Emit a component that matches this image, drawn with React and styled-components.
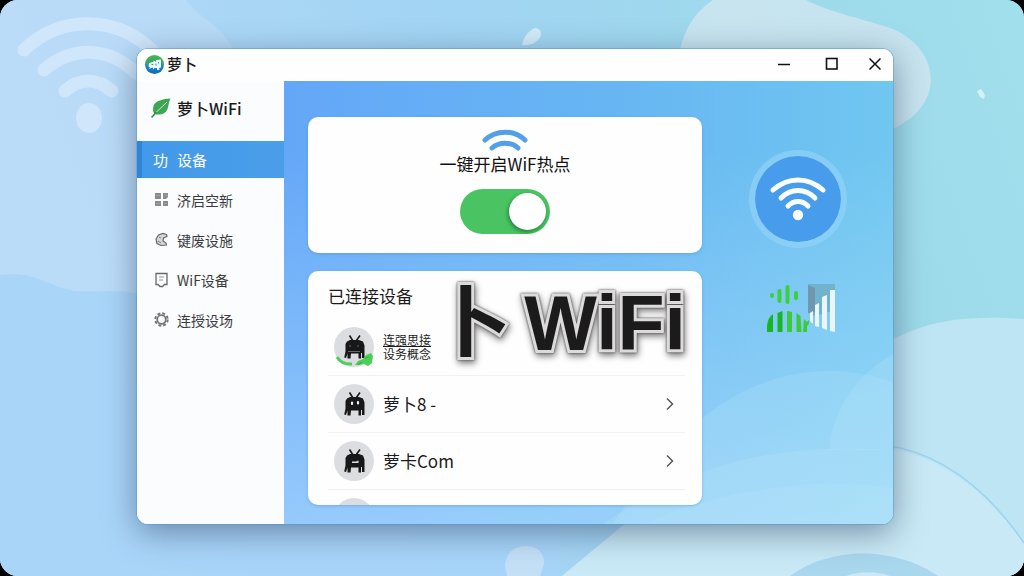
import styled, { createGlobalStyle } from 'styled-components';

const GlobalStyle = createGlobalStyle`
    *,
    *::before {
        box-sizing: border-box;
    }

    body {
        margin: 0;
        background: #000;
        color: #1b1b1d;
        font-family: 'Noto Sans CJK SC', 'Noto Sans', sans-serif;
    }

    button,
    input {
        margin: 0;
        font: inherit;
        color: inherit;
    }
`;

const Desktop = styled.div`
    position: relative;
    display: flex;
    height: 100vh;
    padding: 49px 131px 52px 137px;
    border-radius: 18px;
    overflow: hidden;
    background: #add6f7;
`;

const Wallpaper = styled.svg`
    position: absolute;
    inset: 0;
    width: 100%;
    height: 100%;
`;

const Window = styled.div`
    position: relative;
    flex: 1;
    min-width: 0;
    display: flex;
    flex-direction: column;
    border-radius: 11px;
    overflow: hidden;
    background: #fff;
`;

const WindowFrame = styled.div`
    position: relative;
    flex: 1;
    min-width: 0;
    display: flex;
    border-radius: 11px;
    box-shadow: 0 0 0 1px rgba(75, 155, 215, 0.5),
        0 8px 32px rgba(60, 80, 110, 0.6);
`;

const TitleBar = styled.header`
    display: flex;
    align-items: center;
    gap: 3px;
    height: 32px;
    padding: 0 0 2px 8px;
    background: #fefefe;
`;

const AppName = styled.span`
    flex: 1;
    font-size: 15px;
    line-height: 24px;
    font-weight: 500;
`;

const WindowButton = styled.button`
    display: grid;
    place-items: center;
    width: 45px;
    height: 30px;
    padding: 0;
    border: 0;
    background: none;

    &:last-child {
        width: 36px;
    }
`;

const Body = styled.div`
    flex: 1;
    min-height: 0;
    display: flex;
`;

const Sidebar = styled.aside`
    flex: 0 0 147px;
    background: #fafcfd;
`;

const Brand = styled.div`
    display: flex;
    align-items: center;
    gap: 6px;
    height: 60px;
    padding: 0 0 6px 14px;
    font-size: 16px;
    line-height: 24px;
    font-weight: 500;
`;

const Nav = styled.nav`
    display: flex;
    flex-direction: column;
    gap: 3px;
`;

const NavLink = styled.a`
    display: flex;
    align-items: center;
    gap: 7px;
    height: 37px;
    padding-left: 16px;
    font-size: ${(p) => (p.$active ? 15 : 14)}px;
    line-height: 20px;
    text-decoration: none;
    color: ${(p) => (p.$active ? '#fff' : '#3b3b3e')};
    background: ${(p) =>
        p.$active
            ? 'linear-gradient(90deg, #2f86d8 5px, #4399ea 5px, #4a9ee9)'
            : 'none'};
`;

const NavIcon = styled.span`
    display: flex;
    align-items: center;
    width: 17px;
`;

const Main = styled.main`
    position: relative;
    flex: 1;
    min-width: 0;
    display: flex;
    padding-left: 24px;
    background: linear-gradient(
            180deg,
            rgba(190, 230, 255, 0) 15%,
            rgba(190, 230, 255, 0.55)
        ),
        linear-gradient(90deg, #64a7f8, #67b6f3 55%, #70c7f0);
`;

const Waves = styled.svg`
    position: absolute;
    right: 0;
    bottom: 0;
    width: 310px;
    height: 190px;
`;

const Content = styled.div`
    position: relative;
    flex: 1;
    min-width: 0;
    display: flex;
    flex-direction: column;
    gap: 18px;
    padding: 36px 0 19px;
`;

const Card = styled.section`
    position: relative;
    border-radius: 10px;
    background: #fefefe;
    box-shadow: 0 1px 3px rgba(50, 120, 200, 0.35);
`;

const HotspotCard = styled(Card)`
    display: flex;
    flex-direction: column;
    align-items: center;
    flex-shrink: 0;
    padding: 12px 0 19px;
`;

const HotspotLabel = styled.label`
    font-size: 17px;
    line-height: 24px;
    margin: 1px 0 13px;
    color: #111;
`;

const Switch = styled.input`
    appearance: none;
    width: 90px;
    height: 45px;
    padding: 4px;
    border-radius: 23px;
    background: #4ac463;
    cursor: pointer;

    &::before {
        content: '';
        display: block;
        width: 37px;
        height: 37px;
        border-radius: 50%;
        background: #fff;
        box-shadow: -1px 2px 4px rgba(0, 70, 20, 0.55);
    }

    &:checked::before {
        margin-left: auto;
    }

    &:not(:checked) {
        background: #c5cbd0;
    }
`;

const DevicesCard = styled(Card)`
    flex: 1;
    min-height: 0;
    overflow: hidden;
    padding: 13px 17px 0 20px;
`;

const DevicesTitle = styled.h2`
    margin: 0 0 11px;
    font-size: 17px;
    line-height: 24px;
    font-weight: 400;
`;

const DeviceList = styled.ul`
    margin: 0;
    padding: 0;
    list-style: none;
`;

const Device = styled.li`
    display: flex;
    align-items: center;
    gap: 9px;
    height: 57px;
    padding: 0 10px 0 6px;
    border-bottom: 1px solid #f1f1f1;
`;

const Avatar = styled.svg`
    flex: none;
    width: 40px;
    height: 40px;
    overflow: visible;
`;

const DeviceName = styled.span`
    flex: 1;
    font-size: 17px;
    line-height: 24px;
`;

const DeviceNote = styled.span`
    font-size: 12px;
    line-height: 14px;

    u {
        text-underline-offset: 1px;
    }
`;

const OpenButton = styled.button`
    display: flex;
    padding: 0;
    border: 0;
    background: none;
    color: #55585c;
`;

const Lettering = styled.div`
    position: absolute;
    top: 182px;
    right: 16px;
    display: flex;
    align-items: baseline;
    gap: 13px;
    font-family: 'Liberation Sans', 'Noto Sans CJK SC', sans-serif;
    font-size: 77px;
    line-height: 120px;
    font-weight: 700;
    pointer-events: none;
    color: #1c1b1c;
    -webkit-text-stroke: 6px #dcdada;
    paint-order: stroke fill;
    stroke-linejoin: round;
    filter: drop-shadow(0 0 1px #444) drop-shadow(1px 3px 3px rgba(0, 0, 0, 0.5));
`;

const StatusPanel = styled.aside`
    position: relative;
    flex: 0 0 191px;
    display: flex;
    flex-direction: column;
    align-items: center;
    gap: 36px;
    padding-top: 69px;
`;

const WifiBadge = styled.div`
    display: grid;
    place-items: center;
    width: 98px;
    height: 98px;
    border: 6px solid rgba(150, 212, 250, 0.6);
    border-radius: 50%;
    background: #479ceb;
    background-clip: padding-box;
`;

const LogoIcon = () => (
    <svg width="19" height="19" viewBox="0 0 19 19">
        <defs>
            <linearGradient id="logo" x1="0" y1="0" x2="0" y2="1">
                <stop offset="0" stopColor="#49b83f" />
                <stop offset="0.45" stopColor="#2fa56f" />
                <stop offset="0.65" stopColor="#1581c4" />
                <stop offset="1" stopColor="#1269bd" />
            </linearGradient>
        </defs>
        <circle cx="9.5" cy="9.5" r="9.5" fill="url(#logo)" />
        <path
            d="M4 8l4-1 1-1.500 2 1.500V5l5-.5v8l-2 .5.5 2H12v-2H9.500l-1 1.500-1-2L4 14l1-2H3.500z"
            fill="#eefaff"
        />
        <path d="M6.500 9.500h1.800M11 8.500v2M13.500 7v1.500" stroke="#2491bd" />
    </svg>
);

const LeafIcon = () => (
    <svg width="20" height="20" viewBox="0 0 20 20">
        <path
            d="M19.500.5C12 1 4.500 2.500 2.500 8c-1 3-.5 6 1 8 6 1.500 11 0 13-5 1.300-3.500 1-7 3-10.500z"
            fill="#3ca653"
        />
        <path
            d="M16 4L4 15.500"
            stroke="#d9f3da"
            strokeWidth="0.9"
            fill="none"
        />
        <path
            d="M5 14.500L1 19"
            stroke="#32914a"
            strokeWidth="1.600"
            strokeLinecap="round"
        />
    </svg>
);

const GridIcon = () => (
    <svg width="16" height="15" viewBox="0 0 16 15" fill="#8b8b90">
        <path d="M2 1h6v6H2zM10 1h5v4l-2 2h-3zM2 9h6v5H2zM10 9h5v5h-5z" />
        <path
            d="M3 3.500h4M12 3.500h3M3 11.500h4M11 11.500h3"
            stroke="#a5a5a9"
            strokeWidth="0.8"
        />
    </svg>
);

const CrescentIcon = () => (
    <svg
        width="16"
        height="15"
        viewBox="-1 0 16 15"
        fill="#d6d6d8"
        stroke="#68686c"
        strokeWidth="1.200"
    >
        <path d="M12.500 2.500L9 1.500 4.500 3 2 7l1 4.500 4 2 5.500-.5-.5-2-3-2 .5-3 3.500-1.500z" />
        <path d="M5 5l2 1M4 9l3 2" strokeWidth="0.8" />
    </svg>
);

const DeviceIcon = () => (
    <svg
        width="16"
        height="16"
        viewBox="-1 0 16 16"
        fill="none"
        stroke="#68686c"
        strokeWidth="1.300"
    >
        <path d="M2 1.500h11v11h-2.500l-2 2H6l-2-2H2z" />
        <path d="M5 5h5M5 8h4" stroke="#b5b5b8" />
    </svg>
);

const GearIcon = () => (
    <svg width="16" height="15" viewBox="-1 0 16 15" fill="none">
        <circle
            cx="7.500"
            cy="7.500"
            r="6.200"
            stroke="#77777b"
            strokeWidth="2"
            strokeDasharray="2.900 1.970"
        />
        <circle
            cx="7.500"
            cy="7.500"
            r="4.300"
            stroke="#77777b"
            strokeWidth="1.800"
        />
    </svg>
);

const RobotAvatar = ({ online, eyes }) => (
    <Avatar viewBox="0 0 40 40">
        <circle cx="20" cy="20" r="20" fill="#dcdde0" />
        <g fill="#18181a">
            <path
                d="M19 14L15.500 8.500M22 14l4-5.500"
                stroke="#18181a"
                strokeWidth="1.600"
            />
            <path d="M13 14.500l3-1.500h9l4 1.500 1.500 4v12.500h-2.500v-5h-1v5.500h-2.500v-5h-7.500l-.5 5h-3v-5l-1.500 4.500-1.800-.5 1.300-6V17z" />
        </g>
        {eyes === 'dots' && (
            <path
                d="M18 18.500v1.500M24 18v1.500"
                stroke="#f2f2f2"
                strokeWidth="2.200"
                strokeLinecap="round"
            />
        )}
        {eyes === 'visor' && (
            <path d="M18 20.500h4l2.500-1v2.500h-6.500z" fill="#dcdde0" />
        )}
        {online && (
            <>
                <path
                    d="M14 24.500h12M15 19h2M23 19h2"
                    stroke="#66666a"
                    strokeWidth="1.200"
                />
                <path
                    d="M3 30c3 5 8 7.500 15 7"
                    fill="none"
                    stroke="#4bcf5a"
                    strokeWidth="3"
                />
                <path
                    d="M21 38l3-4 5-2 3-4 5-2 2 3-1 7-4 3-4-2-5 1z"
                    fill="#4bcf5a"
                />
                <path d="M24 38l4-3M31 31l4-1" stroke="#2fa944" />
            </>
        )}
    </Avatar>
);

const SignalIcon = () => (
    <svg width="74" height="48" viewBox="-6 0 74 48">
        <path d="M41 0h27v26L48 32l-7-3z" fill="#6fa9bf" opacity="0.75" />
        <path d="M41 1l7 3v24l-7 1z" fill="#6d8ba0" opacity="0.7" />
        <g fill="#eaf6fd">
            <path d="M43 29l3-2v13l-3-3zM48 21l4-2v24l-4-1zM55 13l5-2v35l-5-2zM63 6h5v42l-5-1z" />
        </g>
        <g stroke="#3cd03c" strokeWidth="4" strokeLinecap="round">
            <path d="M5 11v1M12.500 7v10M20.500 3v15M29 9v5" />
        </g>
        <g fill="#3acb36">
            <path
                d="M0 48V42q1-9 6-12v18zM10.500 48V29l5-2v21z"
                fill="#16b821"
            />
            <path d="M20 27l5 1v20h-5zM29.500 29l4 3 1 16h-5z" />
            <path d="M37 35l3 3 2-2v4l-2 2v6h-4z" />
        </g>
    </svg>
);

const devices = [
    { note: ['连强思接', '设务概念'], online: true },
    { name: '萝卜8 -', eyes: 'dots' },
    { name: '萝卡Com', eyes: 'visor' },
    { eyes: 'dots' },
];

const links = [
    { label: '济启空新', Icon: GridIcon },
    { label: '键废设施', Icon: CrescentIcon },
    { label: 'WiF设备', Icon: DeviceIcon },
    { label: '连授设场', Icon: GearIcon },
];

const Background = () => (
    <Wallpaper viewBox="0 0 1024 576" preserveAspectRatio="none">
        <defs>
            <linearGradient id="sky" x1="0" x2="1" y1="0.2" y2="0">
                <stop offset="0" stopColor="#b5d9f8" />
                <stop offset="0.45" stopColor="#a2d4f3" />
                <stop offset="0.8" stopColor="#9ddbea" />
                <stop offset="1" stopColor="#a2dfed" />
            </linearGradient>
        </defs>
        <rect width="1024" height="576" fill="url(#sky)" />
        <path
            d="M0 0H186C200 20 228 28 234 54V300L137 294C118 288 100 293 74 291C44 285 36 271 0 275z"
            fill="#c0def8"
            opacity="0.6"
        />
        <path
            d="M0 275C36 271 44 285 74 291C100 293 118 288 150 296L560 500V576H0z"
            fill="#a7d3f9"
            opacity="0.85"
        />
        <path
            d="M680 50C686 24 698 10 713 0H806C828 12 868 20 893 29C944 52 944 108 890 130L760 200z"
            fill="#cbe4f0"
            opacity="0.9"
        />
        <path
            d="M562 576L626 523L860 360C910 324 950 314 1024 319V576z"
            fill="#bee5f4"
        />
        <path
            d="M562 576L626 523L800 448C910 430 975 475 1024 544V576z"
            fill="#c9e9f6"
        />
        <path
            d="M885 445C940 453 985 486 1024 543"
            fill="none"
            stroke="#9cd4ef"
            strokeWidth="1.500"
        />
        <path d="M790 576C830 546 895 546 938 576z" fill="#a9d7ee" />
        <path d="M846 576c12-5 32-5 44 0z" fill="#c9e9f6" />
        <path
            d="M505 566c0-12 9-20 21-20 11 0 19 7 18 18l-4 12h-33z"
            fill="#c3e0f6"
        />
        <path
            d="M522 45c1-7 6-14 13-17 6 0 8 6 4 11-5 5-10 7-17 6z"
            fill="#d1ebf8"
        />
        <path d="M977 91l4-2 4 6-1 4-4-2z" fill="#d5f0f8" />
        <g
            fill="none"
            stroke="#d0e6fb"
            strokeWidth="13"
            strokeLinecap="round"
        >
            <path d="M24 50C60 15 115 15 152 50" />
            <path d="M44 70C72 46 108 46 136 73" />
            <path d="M65 91C80 78 97 78 112 91" />
        </g>
        <ellipse cx="89" cy="118" rx="13" ry="15" fill="#d0e6fb" />
    </Wallpaper>
);

const App = () => {
    return (
        <>
            <GlobalStyle />
            <Desktop>
                <Background />
                <WindowFrame>
                    <Window>
                        <TitleBar>
                            <LogoIcon />
                            <AppName>萝卜</AppName>
                            <WindowButton aria-label="最小化">
                                <svg width="14" height="14" stroke="#111">
                                    <path d="M1 7.500h12" strokeWidth="1.700" />
                                </svg>
                            </WindowButton>
                            <WindowButton aria-label="最大化">
                                <svg width="14" height="14" stroke="#111">
                                    <rect
                                        x="1.500"
                                        y="1.500"
                                        width="10.500"
                                        height="10.500"
                                        fill="none"
                                        strokeWidth="1.600"
                                    />
                                </svg>
                            </WindowButton>
                            <WindowButton aria-label="关闭">
                                <svg width="14" height="14" stroke="#111">
                                    <path
                                        d="M1.500 1.500l11 11M12.500 1.500l-11 11"
                                        strokeWidth="1.500"
                                    />
                                </svg>
                            </WindowButton>
                        </TitleBar>
                        <Body>
                            <Sidebar>
                                <Brand>
                                    <LeafIcon />
                                    萝卜WiFi
                                </Brand>
                                <Nav>
                                    <NavLink href="#main" $active>
                                        <NavIcon>功</NavIcon>
                                        设备
                                    </NavLink>
                                    {links.map(({ label, Icon }) => (
                                        <NavLink href="#main" key={label}>
                                            <NavIcon>
                                                <Icon />
                                            </NavIcon>
                                            {label}
                                        </NavLink>
                                    ))}
                                </Nav>
                            </Sidebar>
                            <Main id="main">
                                <Waves viewBox="0 0 310 190" fill="#c0eafa">
                                    <path
                                        d="M30 190C110 60 200 22 290 42L310 48V190z"
                                        opacity="0.2"
                                    />
                                    <path
                                        d="M20 190C110 130 190 108 310 116V190z"
                                        opacity="0.22"
                                    />
                                    <path
                                        d="M246 116C250 72 276 40 310 20V116z"
                                        opacity="0.22"
                                    />
                                    <path
                                        d="M60 190C140 156 220 142 310 154V190z"
                                        opacity="0.15"
                                    />
                                </Waves>
                                <Content>
                                    <HotspotCard>
                                        <svg
                                            width="46"
                                            height="22"
                                            fill="none"
                                            stroke="#539fe8"
                                            strokeWidth="5"
                                            strokeLinecap="round"
                                        >
                                            <path d="M3 11C14 .5 32 .5 43 11" />
                                            <path d="M10 19C17 12.500 29 12.500 36 19" />
                                        </svg>
                                        <HotspotLabel htmlFor="hotspot">
                                            一键开启WiF热点
                                        </HotspotLabel>
                                        <Switch
                                            id="hotspot"
                                            type="checkbox"
                                            role="switch"
                                            defaultChecked
                                        />
                                    </HotspotCard>
                                    <DevicesCard>
                                        <DevicesTitle>已连接设备</DevicesTitle>
                                        <DeviceList>
                                            {devices.map((device, key) => (
                                                <Device key={key}>
                                                    <RobotAvatar
                                                        online={device.online}
                                                        eyes={device.eyes}
                                                    />
                                                    {device.note && (
                                                        <DeviceNote>
                                                            <u>
                                                                {device.note[0]}
                                                            </u>
                                                            <br />
                                                            {device.note[1]}
                                                        </DeviceNote>
                                                    )}
                                                    {device.name && (
                                                        <>
                                                            <DeviceName>
                                                                {device.name}
                                                            </DeviceName>
                                                            <OpenButton
                                                                aria-label={
                                                                    device.name
                                                                }
                                                            >
                                                                <svg
                                                                    width="10"
                                                                    height="14"
                                                                    fill="none"
                                                                    stroke="currentColor"
                                                                    strokeWidth="1.500"
                                                                >
                                                                    <path d="M2 1.500L7.500 7 2 12.500" />
                                                                </svg>
                                                            </OpenButton>
                                                        </>
                                                    )}
                                                </Device>
                                            ))}
                                        </DeviceList>
                                    </DevicesCard>
                                    <Lettering>
                                        <span>卜</span>
                                        <span>WiFi</span>
                                    </Lettering>
                                </Content>
                                <StatusPanel>
                                    <WifiBadge>
                                        <svg
                                            width="56"
                                            height="46"
                                            fill="none"
                                            stroke="#fafdff"
                                            strokeWidth="5"
                                            strokeLinecap="round"
                                        >
                                            <path d="M3 14C18 .5 38 .5 53 14" />
                                            <path d="M11 22C21 12 35 12 45 22" />
                                            <path d="M18 30C24 24 32 24 38 30" />
                                            <circle
                                                cx="28"
                                                cy="39"
                                                r="5.200"
                                                fill="#fafdff"
                                                stroke="none"
                                            />
                                        </svg>
                                    </WifiBadge>
                                    <SignalIcon />
                                </StatusPanel>
                            </Main>
                        </Body>
                    </Window>
                </WindowFrame>
            </Desktop>
        </>
    );
};

export default App;
